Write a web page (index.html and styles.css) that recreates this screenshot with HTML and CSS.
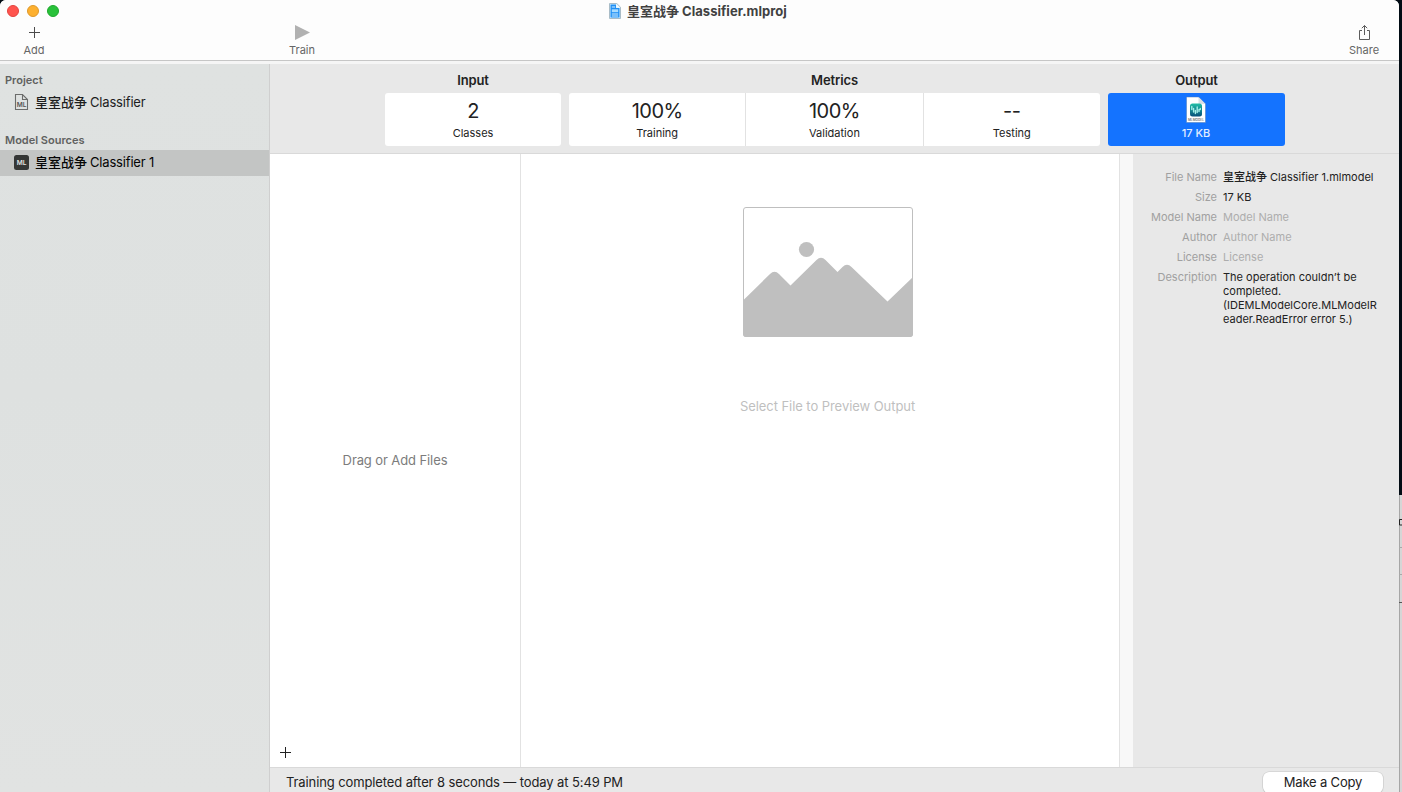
FILE: index.html
```html
<!DOCTYPE html>
<html lang="en">
<head>
<meta charset="utf-8">
<title>皇室战争 Classifier.mlproj</title>
<link rel="stylesheet" href="styles.css">
</head>
<body>
<div class="desktop">
<div class="window">
  <header class="titlebar">
    <div class="title-row">
      <div class="lights"><i class="light red"></i><i class="light amber"></i><i class="light green"></i></div>
      <div class="title">
        <svg class="doc-icon" width="12" height="16" viewBox="0 0 12 16">
          <path d="M.5.5h7.3l3.7 3.7v11.3H.5z" fill="#d9f1ff" stroke="#a9bcc7"/>
          <path d="M1.500 1.500H7v3.600h3.500v9.400h-9z" fill="#1f8ff5"/>
          <path d="M7.400 1.300v3.200h3.200" fill="#f3fbff"/>
          <path d="M2.800 6.300h6.400v2.900H2.800z" fill="#a8dcff"/>
          <path d="M2.800 4h3.300M2.800 11h6.400M2.800 13h6.400" stroke="#d5f0ff"/>
        </svg>
        <span class="title-text"><span class="cjk">皇室战争</span>Classifier.mlproj</span>
      </div>
    </div>
    <div class="tools">
      <div class="tool add">
        <svg width="13" height="17" viewBox="0 0 13 17"><path d="M1 8.500h11M6.500 3v11" stroke="#4b4b4b" fill="none"/></svg>
        <span>Add</span>
      </div>
      <div class="tool train">
        <svg width="15" height="17" viewBox="0 0 15 17"><path d="M0 1l15 7.500L0 16z" fill="#b1b1b1"/></svg>
        <span>Train</span>
      </div>
      <div class="tool share">
        <svg width="13" height="17" viewBox="0 0 13 17"><path d="M4 6.500H1.500v9h10v-9H9M6.500 11V1.500M3.800 4.200l2.700-2.700 2.700 2.700" stroke="#5c5c5c" fill="none"/></svg>
        <span>Share</span>
      </div>
    </div>
  </header>
  <div class="body">
    <nav class="sidebar">
      <h2 class="group">Project</h2>
      <div class="item">
        <svg width="15" height="18" viewBox="0 0 15 18">
          <path d="M1.500 1.500h7l5 5v10h-12z M8.500 1.500v5h5" fill="none" stroke="#6b6c6b" stroke-width="1.100"/>
          <text class="ml-dark" x="7.600" y="14">ML</text>
        </svg>
        <span><span class="cjk">皇室战争</span>Classifier</span>
      </div>
      <h2 class="group second">Model Sources</h2>
      <div class="item selected">
        <svg width="15" height="15" viewBox="0 0 15 15"><rect width="15" height="15" rx="2.500" fill="#353736"/><text class="ml-light" x="7.500" y="10">ML</text></svg>
        <span><span class="cjk">皇室战争</span>Classifier 1</span>
      </div>
    </nav>
    <main class="main">
      <section class="summary">
        <div class="block one">
          <h3>Input</h3>
          <div class="cards"><div class="card"><b>2</b><span>Classes</span></div></div>
        </div>
        <div class="block three">
          <h3>Metrics</h3>
          <div class="cards">
            <div class="card"><b>100%</b><span>Training</span></div>
            <div class="card"><b>100%</b><span>Validation</span></div>
            <div class="card"><b>--</b><span>Testing</span></div>
          </div>
        </div>
        <div class="block out">
          <h3>Output</h3>
          <div class="cards active"><div class="card">
            <svg width="20" height="28" viewBox="0 0 20 28">
              <defs><linearGradient id="teal" x2="0" y2="1"><stop offset="0" stop-color="#22bfa7"/><stop offset="1" stop-color="#07507b"/></linearGradient></defs>
              <path d="M.5 1h12L19.500 8v18.500H.500z" fill="#fff" stroke="#4b76b5" stroke-width=".5"/>
              <path d="M12.500 1v7h7z" fill="#dadfe5"/>
              <rect x="4" y="7.500" width="12" height="13" rx="2.500" fill="url(#teal)"/>
              <path d="M5.800 10.500v3M7.600 12.500v3.500M9.400 14.500v3M11.200 11v5.500M13 13.500v2M14.300 12.500v1" stroke="#a5efe8" stroke-width="1.400" stroke-linecap="round"/>
              <text class="tiny" x="10" y="25">MLMODEL</text>
            </svg>
            <span>17 KB</span>
          </div></div>
        </div>
      </section>
      <section class="content">
        <div class="files">
          <p>Drag or Add Files</p>
          <svg class="plus" width="11" height="11" viewBox="0 0 11 11"><path d="M0 5.500h11M5.500 0v11" stroke="#222"/></svg>
        </div>
        <div class="preview">
          <svg width="170" height="130" viewBox="0 0 170 130">
            <rect x=".5" y=".5" width="169" height="129" rx="2.500" fill="#fff" stroke="#bfbfbf"/>
            <circle cx="63.500" cy="42.500" r="7.600" fill="#bfbfbf"/>
            <path d="M0 93.500L27 67q4.500-4.500 9 0L47.500 78.500 73.500 53q4.500-4.500 9 0L94.500 65l5-5q4.500-4.500 9 0L144.500 94.500 170 70v57q0 3-3 3H3q-3 0-3-3z" fill="#bfbfbf"/>
          </svg>
          <p>Select File to Preview Output</p>
        </div>
        <div class="gutter"></div>
        <dl class="details">
          <dt>File Name</dt><dd class="fname"><span class="cjk">皇室战争</span>Classifier 1.mlmodel</dd>
          <dt>Size</dt><dd>17 KB</dd>
          <dt>Model Name</dt><dd class="empty">Model Name</dd>
          <dt>Author</dt><dd class="empty">Author Name</dd>
          <dt>License</dt><dd class="empty">License</dd>
          <dt>Description</dt><dd>The operation couldn’t be<br>completed.<br>(IDEMLModelCore.MLModelR<br>eader.ReadError error 5.)</dd>
        </dl>
      </section>
      <footer class="status">
        <span>Training completed after 8 seconds — today at 5:49 PM</span>
        <button class="copy">Make a Copy</button>
      </footer>
    </main>
  </div>
</div>
<div class="behind">
  <svg width="3" height="297" viewBox="0 0 3 297"><path d="M.5 0v297" stroke="#a6a6a6"/><path d="M0 52.500h3M0 79.500h3" stroke="#a9a9a9"/><path d="M0 107.500h3" stroke="#555"/><path d="M3 24.500H.500v5.500H3" stroke="#222" fill="none"/></svg>
</div>
</div>
</body>
</html>
```

FILE: styles.css
```css
* { box-sizing: border-box; }
body, h2, h3, p, dl, dd { margin: 0; }
body {
  width: 1402px;
  height: 792px;
  overflow: hidden;
  font-family: Inter, "Noto Sans CJK SC", sans-serif;
  color: #222;
}
svg { display: block; flex: none; }
.desktop {
  display: flex;
  width: 1402px;
  height: 792px;
  background: #020c14;
}
.window {
  display: flex;
  flex-direction: column;
  width: 1399px;
  height: 792px;
  border-radius: 6px 6px 0 0;
  overflow: hidden;
  background: #f5f5f5;
}
.behind {
  width: 3px;
  height: 297px;
  align-self: flex-end;
  background: #d6d6d6;
}
.cjk {
  font-family: "Noto Sans CJK SC", sans-serif;
  font-weight: 500;
  line-height: 1px;
  letter-spacing: 0;
  margin-right: 3px;
}

.titlebar {
  height: 61px;
  flex: none;
  background: #fdfdfd;
  border-bottom: 1px solid #c6c6c6;
}
.title-row { display: flex; height: 23px; }
.lights { display: flex; gap: 8px; width: 609px; padding: 5px 0 0 7px; }
.light { width: 12px; height: 12px; border-radius: 50%; border: 1px solid; }
.red { background: #ff544e; border-color: #e2443f; }
.amber { background: #fdb02f; border-color: #de982a; }
.green { background: #29c13a; border-color: #1fa82d; }
.title { display: flex; gap: 6px; padding-top: 3px; }
.title-text {
  font-size: 13px;
  line-height: 17px;
  font-weight: 700;
  color: #414141;
  white-space: nowrap;
  letter-spacing: 0.04px;
}
.title-text .cjk { font-weight: 700; }
.tools { display: flex; justify-content: space-between; }
.tool {
  display: flex;
  flex-direction: column;
  align-items: center;
  gap: 2px;
  padding-top: 1px;
  font-size: 11px;
  line-height: 14px;
  color: #666;
}
.add { width: 68px; }
.train { width: 68px; margin-left: 200px; margin-right: auto; }
.share { width: 70px; }

.body { display: flex; flex: 1; padding-top: 3px; }
.sidebar {
  width: 270px;
  background: linear-gradient(180deg, #dfe2e1 0, #dee1e0 45%, #e1e3e2 100%);
  border-right: 1px solid #cfcfcf;
  padding-top: 8px;
}
.group { padding-left: 5px; font-size: 11px; line-height: 16px; font-weight: 600; color: #5f6160; }
.second { margin-top: 16px; }
.item {
  display: flex;
  align-items: center;
  gap: 6px;
  height: 26px;
  padding-left: 14px;
  font-size: 13px;
  line-height: 18px;
  letter-spacing: -0.18px;
  color: #1d1e1e;
  white-space: nowrap;
}
.item:not(.selected) { margin-top: 1px; height: 27px; padding-bottom: 2px; }
.selected { background: #c3c5c4; margin-top: 2px; padding-bottom: 2px; color: #050505; }
.ml-dark, .ml-light, .tiny { text-anchor: middle; font-family: Inter, sans-serif; font-weight: 600; letter-spacing: 0; }
.ml-dark { font-size: 6.5px; fill: #555; }
.ml-light { font-size: 6.5px; fill: #e4e5e4; }
.tiny { font-size: 3.2px; fill: #777; }

.main { display: flex; flex-direction: column; width: 1129px; }
.summary {
  display: flex;
  gap: 8px;
  height: 90px;
  padding: 8px 0 0 115px;
  background: #e8e8e8;
  border-bottom: 1px solid #d9d9d9;
}
.block h3 { font-size: 13px; line-height: 17px; font-weight: 600; text-align: center; margin-bottom: 4px; letter-spacing: -0.1px; }
.one { width: 176px; }
.three { width: 531px; }
.out { width: 177px; }
.cards { display: flex; height: 53px; border-radius: 3px; overflow: hidden; background: #fff; }
.card { flex: 1; display: flex; flex-direction: column; align-items: center; }
.card + .card { border-left: 1px solid #e2e2e2; }
.card b { font-size: 20px; line-height: 24px; margin: 6px 0 2px; font-weight: 400; letter-spacing: -0.5px; }
.card span { font-size: 11px; line-height: 16px; }
.active { background: #1473ff; padding-right: 1px; }
.active span { color: #e2edff; font-weight: 500; }
.active svg { margin: 3px 0 1px; }

.content { display: flex; height: 613px; background: #fff; }
.files {
  display: flex;
  flex-direction: column;
  justify-content: space-between;
  width: 251px;
  padding: 298px 0 9px 10px;
  border-right: 1px solid #e2e2e2;
}
.files p { font-size: 13px; line-height: 17px; text-align: center; padding-right: 10px; color: #7c7c7c; letter-spacing: -0.1px; }
.preview { display: flex; flex-direction: column; align-items: center; width: 598px; padding: 53px 0 0 15px; }
.preview p { margin-top: 61px; font-size: 13px; line-height: 17px; color: #bfbfbf; letter-spacing: -0.06px; }
.gutter { width: 14px; background: #f8f8f8; border-left: 1px solid #e2e2e2; }
.details {
  display: grid;
  grid-template-columns: 84px 170px;
  column-gap: 6px;
  row-gap: 6px;
  align-content: start;
  flex: 1;
  padding-top: 16px;
  background: #e8e8e8;
  font-size: 11px;
  line-height: 14px;
}
.details dt { text-align: right; color: #a0a0a0; }
.details dd { white-space: nowrap; }
.details .empty { color: #adadad; }
.status {
  display: flex;
  justify-content: space-between;
  height: 25px;
  padding: 3px 16px 0 16px;
  background: #e8e8e8;
  border-top: 1px solid #d9d9d9;
  font-size: 13px;
  line-height: 23px;
  letter-spacing: -0.11px;
  white-space: nowrap;
}
.copy {
  width: 120px;
  height: 21px;
  margin-top: 1px;
  padding: 0;
  border: 0;
  border-radius: 6px;
  background: #fff;
  box-shadow: 0 0 0 .5px #c5c5c5, 0 1px 1px #bbb;
  font: 13px/19px Inter, sans-serif;
  letter-spacing: -0.17px;
  color: #222;
}
```
